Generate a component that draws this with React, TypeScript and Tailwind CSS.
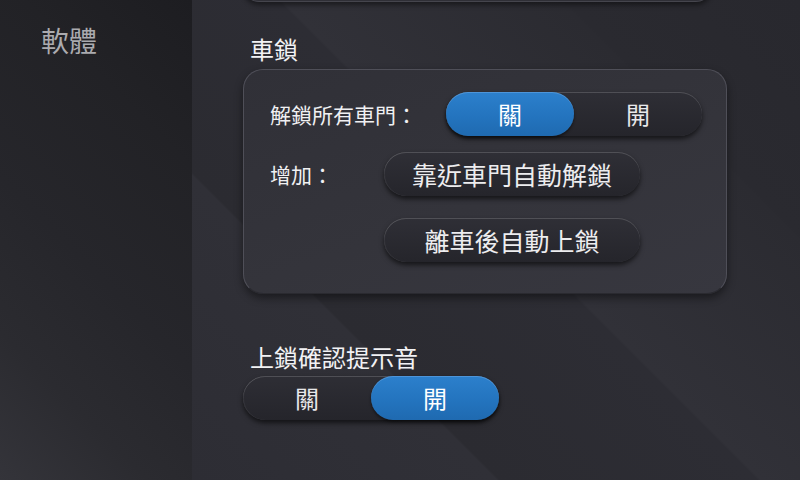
import React from "react";

function Toggle({ value }: { value: "off" | "on" }) {
  const seg = "flex h-full w-1/2 items-center justify-center rounded-full text-[24px] leading-none";
  const active =
    "bg-[linear-gradient(180deg,#2c80cc_0%,#2373bd_60%,#1f6ab0_100%)] text-white shadow-[inset_0_1px_0_rgba(140,190,240,0.35),0_2px_3px_rgba(0,0,0,0.45)]";
  return (
    <div className="flex h-[44px] w-[256px] rounded-full bg-[linear-gradient(180deg,#2e2e35,#25252b)] shadow-[inset_0_1px_0_rgba(255,255,255,0.16),inset_1px_0_0_rgba(255,255,255,0.06),0_3px_5px_rgba(0,0,0,0.6)]">
      <div className={`${seg} ${value === "off" ? active : "text-[#e8e8ea]"}`}>關</div>
      <div className={`${seg} ${value === "on" ? active : "text-[#e8e8ea]"}`}>開</div>
    </div>
  );
}

function PillButton({ label }: { label: string }) {
  return (
    <button
      type="button"
      className="flex h-[44px] w-[256px] items-center justify-center rounded-full bg-[linear-gradient(180deg,#2f2f36,#25252b)] text-[25px] leading-none text-[#ededef] shadow-[inset_0_1px_0_rgba(255,255,255,0.16),inset_1px_0_0_rgba(255,255,255,0.06),0_3px_5px_rgba(0,0,0,0.6)]"
    >
      {label}
    </button>
  );
}

export default function App() {
  return (
    <div className="flex h-[480px] w-[800px] overflow-hidden font-['Noto_Sans_CJK_TC','Noto_Sans',sans-serif]">
      <aside className="w-[192px] shrink-0 bg-[linear-gradient(45deg,#34343a_0%,#2b2b30_22%,#26262b_45%,#222226_75%,#1d1d21_100%)] pl-[41px] pt-[22px]">
        <div className="text-[28px] leading-[36px] text-[#ababaf]">軟體</div>
      </aside>

      <main className="flex-1 bg-[linear-gradient(45deg,#2d2d34_0%,#303037_28%,#2b2b31_28.3%,#2d2d34_52%,#313138_52.3%,#2b2b31_78%,#2a2a30_78.3%,#28282e_100%)] pl-[51px]">
        <div className="-mt-[14px] h-[16px] w-[469px] rounded-b-[18px] border border-t-0 border-[#45454d] bg-[#2f2f36] shadow-[0_3px_5px_rgba(0,0,0,0.45)]" />

        <h2 className="mt-[32px] pl-[7px] text-[24px] leading-[30px] text-[#f2f2f4]">車鎖</h2>

        <section className="mt-[5px] h-[225px] w-[484px] rounded-[20px] border border-[#4f4f58] border-b-[#2a2a30] bg-[linear-gradient(160deg,#303037_0%,#34343b_55%,#37373f_100%)] pl-[26px] pt-[22px] shadow-[0_4px_8px_rgba(0,0,0,0.45)]">
          <div className="flex items-center">
            <span className="w-[176px] text-[21px] leading-none text-[#f0f0f2]">解鎖所有車門：</span>
            <Toggle value="off" />
          </div>
          <div className="mt-[16px] flex items-center">
            <span className="w-[114px] text-[21px] leading-none text-[#f0f0f2]">增加：</span>
            <PillButton label="靠近車門自動解鎖" />
          </div>
          <div className="mt-[22px] flex items-center pl-[114px]">
            <PillButton label="離車後自動上鎖" />
          </div>
        </section>

        <h2 className="mt-[48px] pl-[7px] text-[24px] leading-[30px] text-[#f2f2f4]">上鎖確認提示音</h2>
        <div className="mt-[4px]">
          <Toggle value="on" />
        </div>
      </main>
    </div>
  );
}
